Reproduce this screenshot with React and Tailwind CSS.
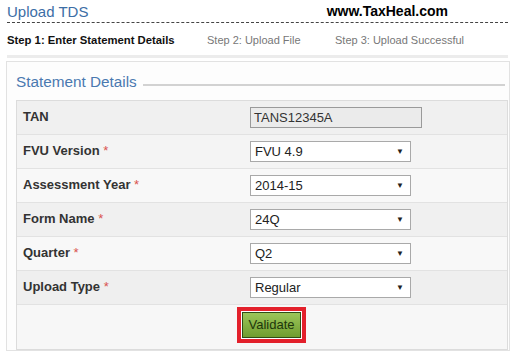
import React from 'react';

const rows = [
    { label: 'TAN', value: 'TANS12345A', kind: 'text', bg: 'bg-[#f0f0f0]' },
    { label: 'FVU Version', value: 'FVU 4.9', kind: 'select', bg: 'bg-[#f4f4f4]', required: true },
    { label: 'Assessment Year', value: '2014-15', kind: 'select', bg: 'bg-[#f8f8f8]', required: true },
    { label: 'Form Name', value: '24Q', kind: 'select', bg: 'bg-[#f0f0f0]', required: true },
    { label: 'Quarter', value: 'Q2', kind: 'select', bg: 'bg-[#f8f8f8]', required: true },
    { label: 'Upload Type', value: 'Regular', kind: 'select', bg: 'bg-[#efefef]', required: true },
];

const Field = ({ row }) => {
    if (row.kind === 'text') {
        return (
            <div className="w-[172px] h-[21px] border border-[#9a9a9a] bg-[#ebebeb] pl-[3px] flex items-center text-[13px] text-[#333]">
                {row.value}
            </div>
        );
    }
    return (
        <div className="w-[161px] h-[21px] border border-[#a9a9a9] bg-white pl-[4px] pr-[6px] flex items-center justify-between text-[13px] text-[#222]">
            <span>{row.value}</span>
            <span className="text-[8px] text-[#222]">▼</span>
        </div>
    );
};

const App = () => {
    return (
        <div className="w-[515px] h-[359px] bg-white overflow-hidden font-['Liberation_Sans',Arial,sans-serif]">
            {/* Header */}
            <div className="px-[7px] pt-[1px]">
                <div className="h-[22px] flex items-end justify-between pr-[60px] border-b border-dashed border-[#444]">
                    <span className="text-[15px] leading-[20px] text-[#3c6ea6]">Upload TDS</span>
                    <span className="text-[14px] leading-[18px] font-bold text-black mb-[2px]">www.TaxHeal.com</span>
                </div>

                {/* Steps */}
                <div className="h-[35px] flex items-center pt-[3px] text-[11px] border-b-[3px] border-[#ececec]">
                    <span className="w-[200px] font-bold text-[#111] text-[11.3px]">Step 1: Enter Statement Details</span>
                    <span className="w-[128px] text-[#777]">Step 2: Upload File</span>
                    <span className="text-[#777]">Step 3: Upload Successful</span>
                </div>
            </div>

            {/* Panel */}
            <div className="mt-[3px] ml-[6px] mr-[5px] h-[290px] border border-[#e2e2e2] bg-[#fdfdfd] pl-[9px] pr-[1px]">
                <div className="h-[38px] flex items-center gap-[6px] pr-[3px]">
                    <span className="text-[15.3px] text-[#4a79b0] pt-[2px]">Statement Details</span>
                    <div className="flex-1 h-[2px] bg-[#d2d2d2] mt-[8px]" />
                </div>

                <div className="border border-[#dcdcdc]">
                    {rows.map((row) => (
                        <div key={row.label} className={`flex h-[34px] border-b border-[#e2e2e2] ${row.bg}`}>
                            <div className="w-[233px] pl-[6px] pt-[6px] text-[13px] font-bold text-[#333]">
                                {row.label}
                                {row.required && <span className="font-normal text-[#d9534f]"> *</span>}
                            </div>
                            <div className="pt-[6px]">
                                <Field row={row} />
                            </div>
                        </div>
                    ))}
                    <div className="h-[44px] bg-[#f7f7f7] pl-[220px] pt-[2px]">
                        <div className="w-[69px] h-[36px] border-[4px] border-[#e3202b] bg-white p-[1px]">
                            <button className="w-full h-full border border-[#2f4d14] bg-gradient-to-b from-[#9cc65a] to-[#6f9d2f] text-[13px] text-[#1d360b]">
                                Validate
                            </button>
                        </div>
                    </div>
                </div>
            </div>
        </div>
    );
};

export default App;
